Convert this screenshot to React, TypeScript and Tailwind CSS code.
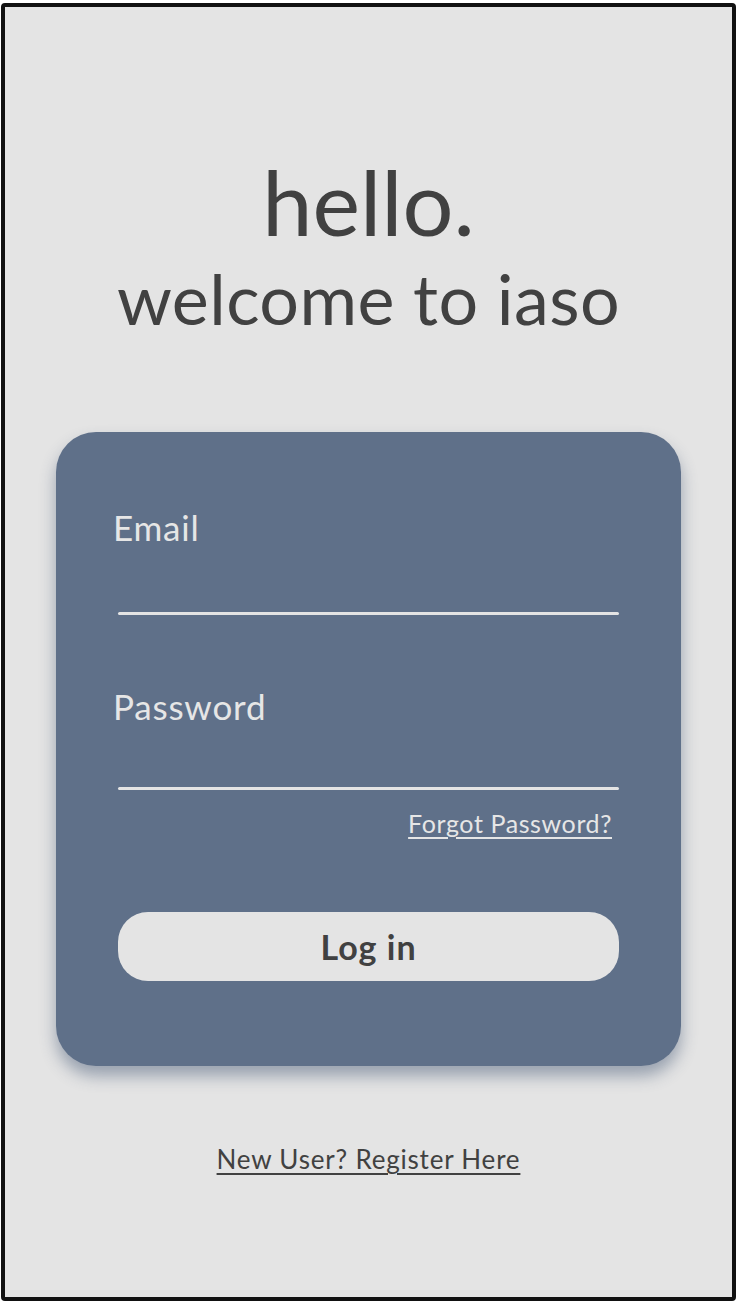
export default function App() {
  return (
    <div className="min-h-[1304px] w-[738px] bg-white pt-[3px] pl-[1px]" style={{ fontFamily: "Lato, 'Open Sans', sans-serif" }}>
      <div className="flex h-[1298px] w-[735px] flex-col items-center rounded-[4px] border-4 border-[#111111] bg-[#e4e4e4] pt-[149px] text-[#414141]">
        <h1 className="text-[90px] leading-none">hello.</h1>
        <h2 className="mt-[17px] text-[70px] leading-none tracking-[0.4px]">welcome to iaso</h2>

        {/* Login card */}
        <div className="mt-[99px] flex w-[625px] flex-col rounded-[40px] bg-[#5f7089] px-[62px] pt-[78px] pb-[85px] shadow-[0_10px_16px_rgba(60,80,110,0.45)]">
          <label className="-ml-[5px] text-[35px] leading-none tracking-[0.8px] text-[#e6e6e6]">Email</label>
          <div className="mt-[67px] h-[3px] rounded-full bg-[#e4e4e4]" />

          <label className="mt-[74px] -ml-[5px] text-[35px] leading-none tracking-[0.8px] text-[#e6e6e6]">Password</label>
          <div className="mt-[63px] h-[3px] rounded-full bg-[#e4e4e4]" />

          <a href="#" className="mt-[21px] mr-[7px] self-end text-[25px] leading-none tracking-[0.6px] text-[#e6e6e6] underline underline-offset-[4px]">
            Forgot Password?
          </a>

          <button className="mt-[76px] h-[69px] rounded-[30px] bg-[#e4e4e4] text-[34px] font-bold tracking-[1px] text-[#414141]">
            Log in
          </button>
        </div>

        <a href="#" className="mt-[80px] text-[26px] leading-none tracking-[0.8px] text-[#414141] underline underline-offset-[4px]">
          New User? Register Here
        </a>
      </div>
    </div>
  );
}
